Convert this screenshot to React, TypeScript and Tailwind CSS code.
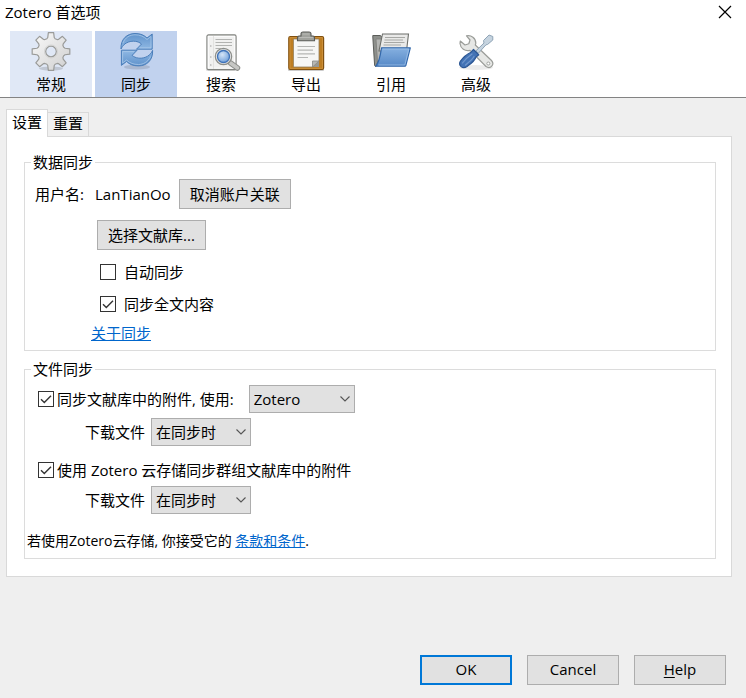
import { useState } from 'react';
import type { ReactNode } from 'react';

/* -------------- toolbar icons ------------------------------ */
const gearPath = (() => {
  const points: string[] = [];
  const at = (deg: number, r: number) => {
    const a = (deg * Math.PI) / 180;
    points.push(`${(20 + r * Math.cos(a)).toFixed(2)} ${(20.5 + r * Math.sin(a)).toFixed(2)}`);
  };
  for (let i = 0; i < 8; i++) {
    at(i * 45 - 18, 13.4);
    at(i * 45 - 13, 14.4);
    at(i * 45 - 8, 19);
    at(i * 45 + 8, 19);
    at(i * 45 + 13, 14.4);
    at(i * 45 + 18, 13.4);
  }
  return `M${points.join('L')}Z M25.3 20.5a5.3 5.3 0 1 0 -10.6 0a5.3 5.3 0 1 0 10.6 0Z`;
})();

function GearIcon() {
  return (
    <svg viewBox="0 0 40 40" className="size-10" aria-hidden="true">
      <defs>
        <linearGradient id="gear" x1="0" y1="0" x2="1" y2="1">
          <stop offset="0" stopColor="#fafafa" />
          <stop offset="1" stopColor="#cfcfcf" />
        </linearGradient>
      </defs>
      <ellipse cx="20" cy="37.5" rx="12" ry="2" fill="#000" opacity=".14" />
      <path d={gearPath} fill="url(#gear)" fillRule="evenodd" stroke="#9a9b99" strokeWidth="1.2" strokeLinejoin="round" />
      <circle cx="20" cy="20.5" r="6.5" fill="none" stroke="#d2d2d1" strokeWidth="1" />
    </svg>
  );
}

function SyncIcon() {
  const arrow =
    'M5 18C4.5 8 11 2.6 19 2.5C24.500 2.5 28 4 31 7L36.200 3V18.200H20.500L25.500 13C22 10 17 9.500 12.500 11C9 12.200 6.500 14.500 5 18Z';
  return (
    <svg viewBox="0 0 40 40" className="size-10" aria-hidden="true">
      <defs>
        <linearGradient id="sync" x1="0" y1="0" x2="0" y2="1">
          <stop offset="0" stopColor="#5f92cb" />
          <stop offset="1" stopColor="#8fb8e3" />
        </linearGradient>
      </defs>
      <ellipse cx="21" cy="36" rx="13" ry="2.5" fill="#000" opacity=".12" />
      <g fill="url(#sync)" stroke="#4a7eba" strokeWidth="1" strokeLinejoin="round">
        <path d={arrow} />
        <path d={arrow} transform="rotate(180 20.8 18.7)" />
      </g>
      <g fill="none" stroke="#a9c8e9" strokeWidth=".8">
        <path d="M7 12C9 6.5 14 3.800 19 3.800C24 3.800 28 5.500 31 8.500L35 5.400V16.800H23.500" />
        <path d="M34.500 25.500C32 31 27 33.500 22.500 33.500C17.500 33.500 14 32 10.500 29L6.600 32V20.600H18" />
      </g>
    </svg>
  );
}

function SearchIcon() {
  return (
    <svg viewBox="0 0 40 40" className="size-10" aria-hidden="true">
      <defs>
        <radialGradient id="lens" cx=".4" cy=".35" r=".7">
          <stop offset="0" stopColor="#d5e5f7" />
          <stop offset="1" stopColor="#6c9dd9" />
        </radialGradient>
      </defs>
      <rect x="5" y="37" width="31" height="3" rx="1.5" fill="#000" opacity=".14" />
      <rect x="6" y="4" width="29" height="34.5" rx="1.5" fill="#f1f1f0" stroke="#80827e" strokeWidth="1.3" />
      <rect x="7.2" y="5.2" width="26.6" height="32" fill="none" stroke="#fff" />
      <path d="M12.500 5V38" stroke="#dededc" strokeWidth=".8" />
      <path d="M14.500 8.500H31M14.500 11.500H31M14.500 14.500H31M14.500 17.500H20" stroke="#b2b3b1" strokeWidth="1.1" />
      <g fill="#aaa">
        <circle cx="9.8" cy="15" r=".8" />
        <circle cx="9.8" cy="26" r=".8" />
        <circle cx="9.8" cy="34" r=".8" />
      </g>
      <path d="M29.500 32L36.500 37" stroke="#8b8d89" strokeWidth="5.5" strokeLinecap="round" />
      <path d="M29.500 32L36.500 37" stroke="#c6c7c4" strokeWidth="3.5" strokeLinecap="round" />
      <circle cx="22.5" cy="25.5" r="8.2" fill="#e4e4e3" stroke="#8b8d89" strokeWidth="1.2" />
      <circle cx="22.5" cy="25.5" r="6" fill="url(#lens)" stroke="#3f73b9" strokeWidth="1.3" />
    </svg>
  );
}

function ExportIcon() {
  return (
    <svg viewBox="0 0 40 40" className="size-10" aria-hidden="true">
      <rect x="2" y="37.5" width="36" height="2.5" rx="1" fill="#000" opacity=".2" />
      <rect x="2.8" y="5.5" width="34.8" height="33" rx="1.5" fill="#bd7d22" stroke="#80500f" strokeWidth="1.2" />
      <rect x="4" y="6.7" width="32.4" height="30.6" fill="none" stroke="#cf9440" strokeWidth=".8" />
      <path d="M7.500 8H33V30L26.500 36H7.500Z" fill="#f6f6f5" stroke="#96825f" strokeWidth=".8" />
      <path d="M26.500 36V30H33Z" fill="#b7b8b5" stroke="#858681" strokeWidth=".8" />
      <path d="M27 36H33V30Z" fill="#979894" />
      <path d="M11.500 15.500H29M11.500 19.200H27M11.500 22.800H29M11.500 26.500H22" stroke="#b5b6b4" strokeWidth="1.2" />
      <path
        d="M15 5V3Q15 1 17 1H23Q25 1 25 3V5H27Q28.500 5 28.500 6.500V9.800H11.500V6.500Q11.500 5 13 5Z"
        fill="#a0a29d"
        stroke="#595b57"
        strokeWidth="1.1"
      />
      <path d="M13 6.500H27M16.500 3H23.500" stroke="#b9bab6" strokeWidth="1" />
    </svg>
  );
}

function CiteIcon() {
  return (
    <svg viewBox="0 0 40 40" className="size-10" aria-hidden="true">
      <defs>
        <linearGradient id="folder" x1="0" y1="0" x2="0" y2="1">
          <stop offset="0" stopColor="#86b0e0" />
          <stop offset="1" stopColor="#5689c7" />
        </linearGradient>
      </defs>
      <path d="M1.800 6V4.500H9.500L11 6.500V20L5 35.500Q3.800 35.500 3.600 34Z" fill="#8e908c" stroke="#5b5d59" strokeWidth="1" />
      <path d="M5 8H14L9 30H6.500Z" fill="#b5b6b3" stroke="#7d7f7b" strokeWidth=".8" />
      <path d="M11.500 3H37.500L35.500 20H8Z" fill="#e9e9e8" stroke="#6d6f6b" strokeWidth="1.1" />
      <path d="M14 6.500H34M13.500 9H32M13 11.500H33.500M12.500 14H30" stroke="#a7a8a5" strokeWidth="1" />
      <path
        d="M10.500 16.800H39.300L34.800 34.500Q34.600 35.200 34 35.200H4.800Q8.500 31 10.500 16.800Z"
        fill="url(#folder)"
        stroke="#3368ab"
        strokeWidth="1.2"
        strokeLinejoin="round"
      />
      <path d="M11.600 18H37.800L33.800 34H7.500" fill="none" stroke="#9fc1e8" strokeWidth=".8" />
    </svg>
  );
}

function AdvancedIcon() {
  return (
    <svg viewBox="0 0 40 40" className="size-10" aria-hidden="true">
      <ellipse cx="20" cy="36.5" rx="17" ry="2.5" fill="#000" opacity=".08" />
      <path
        d="M10.500 4.800C15 3.800 20 7 19.800 12.300L19.300 14L35.500 29.500C39 33.500 34.500 38.500 30 35.500L14 19.300C9 20.500 4.500 17.500 4 12.500L4.300 10L9 14L12.800 12.800L14 9Z"
        fill="#e6e7e5"
        stroke="#9b9d99"
        strokeWidth="1.2"
        strokeLinejoin="round"
      />
      <circle cx="32.3" cy="32.5" r="1.5" fill="#fff" stroke="#999b97" strokeWidth=".9" />
      <path
        d="M19.800 20L28 12L27.500 9.500L33 4L36.800 5.500V9L31.500 13.500L30 13.800L22.300 22.300Z"
        fill="#c5d3df"
        stroke="#8fa4b6"
        strokeWidth="1"
        strokeLinejoin="round"
      />
      <path
        d="M17.500 18.500L22.800 23.800L20 26C18.500 30.500 14.500 33 11 35.500C6.500 38.500 2 34.500 4.300 30.300C7 26.500 11 23 15 21.200Z"
        fill="#4373b5"
        stroke="#2b5694"
        strokeWidth="1.2"
        strokeLinejoin="round"
      />
      <path
        d="M16 23C12.500 25.500 9 28.500 6.500 32M18 25.500C16 29 12.500 31.500 9.500 34"
        fill="none"
        stroke="#7198cd"
        strokeWidth="1.2"
        strokeLinecap="round"
      />
    </svg>
  );
}

const panes = [
  { id: 'general', label: '常规', icon: <GearIcon /> },
  { id: 'sync', label: '同步', icon: <SyncIcon /> },
  { id: 'search', label: '搜索', icon: <SearchIcon /> },
  { id: 'export', label: '导出', icon: <ExportIcon /> },
  { id: 'cite', label: '引用', icon: <CiteIcon /> },
  { id: 'advanced', label: '高级', icon: <AdvancedIcon /> },
];

/* -------------- form controls ------------------------------ */
type CheckboxProps = {
  label: string;
  defaultChecked?: boolean;
  gap?: string;
};

function Checkbox({ label, defaultChecked, gap = 'gap-[3px]' }: CheckboxProps) {
  return (
    <label className={`flex items-center ${gap}`}>
      <span className="grid size-4 shrink-0">
        <input
          type="checkbox"
          defaultChecked={defaultChecked}
          className="peer col-start-1 row-start-1 size-4 appearance-none border border-[#333] bg-white"
        />
        <svg
          viewBox="0 0 16 16"
          className="pointer-events-none invisible col-start-1 row-start-1 size-4 peer-checked:visible"
          aria-hidden="true"
        >
          <path d="M3 8.300L6.300 11.500L13 4.800" fill="none" stroke="#333" strokeWidth="1.4" />
        </svg>
      </span>
      <span className="whitespace-nowrap">{label}</span>
    </label>
  );
}

type SelectProps = {
  label: string;
  width: string;
  options: string[];
  id: string;
};

function Select({ label, width, options, id }: SelectProps) {
  return (
    <span className={`grid h-7 ${width}`}>
      <select
        id={id}
        aria-label={label}
        className="col-start-1 row-start-1 w-full appearance-none border border-[#adadad] bg-[#e1e1e1] pl-1"
      >
        {options.map((o) => (
          <option key={o}>{o}</option>
        ))}
      </select>
      <svg
        viewBox="0 0 10 8"
        className="pointer-events-none col-start-1 row-start-1 mr-[5px] h-2 w-2.5 self-center justify-self-end"
        aria-hidden="true"
      >
        <path d="M.5 1.500L5 6L9.500 1.500" fill="none" stroke="#555" strokeWidth="1.1" />
      </svg>
    </span>
  );
}

function Button({ children, className = '' }: { children: ReactNode; className?: string }) {
  return (
    <button type="button" className={`h-[30px] whitespace-nowrap bg-[#e1e1e1] ${className}`}>
      {children}
    </button>
  );
}

function DownloadRow({ id }: { id: string }) {
  return (
    <div className="flex items-center gap-1.5 pl-[60px]">
      <label htmlFor={id}>下载文件</label>
      <Select id={id} label="下载文件" width="w-[100px]" options={['在同步时', '在需要时']} />
    </div>
  );
}

/* -------------- UI ----------------------------------------- */
export default function App() {
  const [pane, setPane] = useState('sync');

  return (
    <div className="flex min-h-screen flex-col bg-[#efefef] font-['Open_Sans','Noto_Sans_CJK_SC',sans-serif] text-[15px] leading-5 text-black">
      <header className="border-b border-[#838383] bg-white">
        <div className="flex h-[31px] items-start justify-between pt-0.5 pr-[14px] pl-[5px]">
          <h1>Zotero 首选项</h1>
          <button type="button" aria-label="关闭" className="pt-[3px]">
            <svg viewBox="0 0 14 14" className="size-3.5" aria-hidden="true">
              <path d="M1 1L13 13M13 1L1 13" stroke="#000" strokeWidth="1.2" />
            </svg>
          </button>
        </div>
        <nav className="flex gap-[3px] pl-2.5">
          {panes.map((p) => (
            <button
              key={p.id}
              type="button"
              onClick={() => setPane(p.id)}
              className={`flex h-[66px] w-[82px] flex-col items-center gap-[3px] ${
                pane === p.id ? 'bg-[#c1d2ee]' : p.id === 'general' ? 'bg-[#e0e8f6]' : 'hover:bg-[#e0e8f6]'
              }`}
            >
              {p.icon}
              <span>{p.label}</span>
            </button>
          ))}
        </nav>
      </header>

      <main className="pt-[11px] pr-[14px] pl-1.5">
        <div role="tablist" className="flex items-end">
          <button
            type="button"
            role="tab"
            aria-selected="true"
            className="relative -mb-px h-7 border border-b-0 border-[#d9d9d9] bg-white px-[5px] pb-1"
          >
            设置
          </button>
          <button
            type="button"
            role="tab"
            aria-selected="false"
            className="h-6 border border-b-0 border-l-0 border-[#d9d9d9] bg-[#f0f0f0] px-[5px] pb-1"
          >
            重置
          </button>
        </div>

        <div role="tabpanel" className="border border-[#d9d9d9] bg-white pt-[15px] pr-[15px] pb-[17px] pl-[17px]">
          <fieldset className="border border-[#dcdcdc] pb-[7px]">
            <legend className="ml-1.5 px-0.5">数据同步</legend>
            <div className="flex items-center pt-[7px] pl-2.5">
              <span className="w-[60px]">用户名:</span>
              <span className="mr-2">LanTianOo</span>
              <Button className="border border-[#adadad] px-2.5">取消账户关联</Button>
            </div>
            <div className="flex flex-col items-start pt-[11px] pl-[72px]">
              <Button className="border border-[#adadad] px-2.5">选择文献库...</Button>
              <div className="flex flex-col gap-3 py-3 pl-[3px]">
                <Checkbox label="自动同步" gap="gap-2" />
                <Checkbox label="同步全文内容" defaultChecked gap="gap-2" />
              </div>
            </div>
            <a href="#about" className="-mt-[3px] ml-[66px] block w-fit text-[#0066cc] underline">
              关于同步
            </a>
          </fieldset>

          <fieldset className="mt-2 border border-[#dcdcdc] pb-[7px]">
            <legend className="ml-1.5 px-0.5">文件同步</legend>
            <div className="flex items-center gap-[15px] pt-1.5 pl-[13px]">
              <Checkbox label="同步文献库中的附件, 使用:" defaultChecked />
              <Select id="storage" label="使用" width="w-[106px]" options={['Zotero', 'WebDAV']} />
            </div>
            <div className="pt-[5px]">
              <DownloadRow id="download-library" />
            </div>
            <div className="pt-[14px] pb-1.5 pl-[13px]">
              <Checkbox label="使用 Zotero 云存储同步群组文献库中的附件" defaultChecked />
            </div>
            <DownloadRow id="download-groups" />
            <p className="pt-[17px] pl-0.5 text-sm">
              若使用Zotero云存储, 你接受它的{' '}
              <a href="#terms" className="text-[#0066cc] underline">
                条款和条件
              </a>
              .
            </p>
          </fieldset>
        </div>
      </main>

      <footer className="mt-auto flex justify-end gap-[15px] pt-4 pr-5 pb-[13px]">
        <Button className="w-[92px] border-2 border-[#0078d7] pb-0.5">OK</Button>
        <Button className="w-[92px] border border-[#adadad] pb-0.5">Cancel</Button>
        <Button className="w-[92px] border border-[#adadad] pb-0.5">
          <span className="underline underline-offset-2">H</span>elp
        </Button>
      </footer>
    </div>
  );
}
